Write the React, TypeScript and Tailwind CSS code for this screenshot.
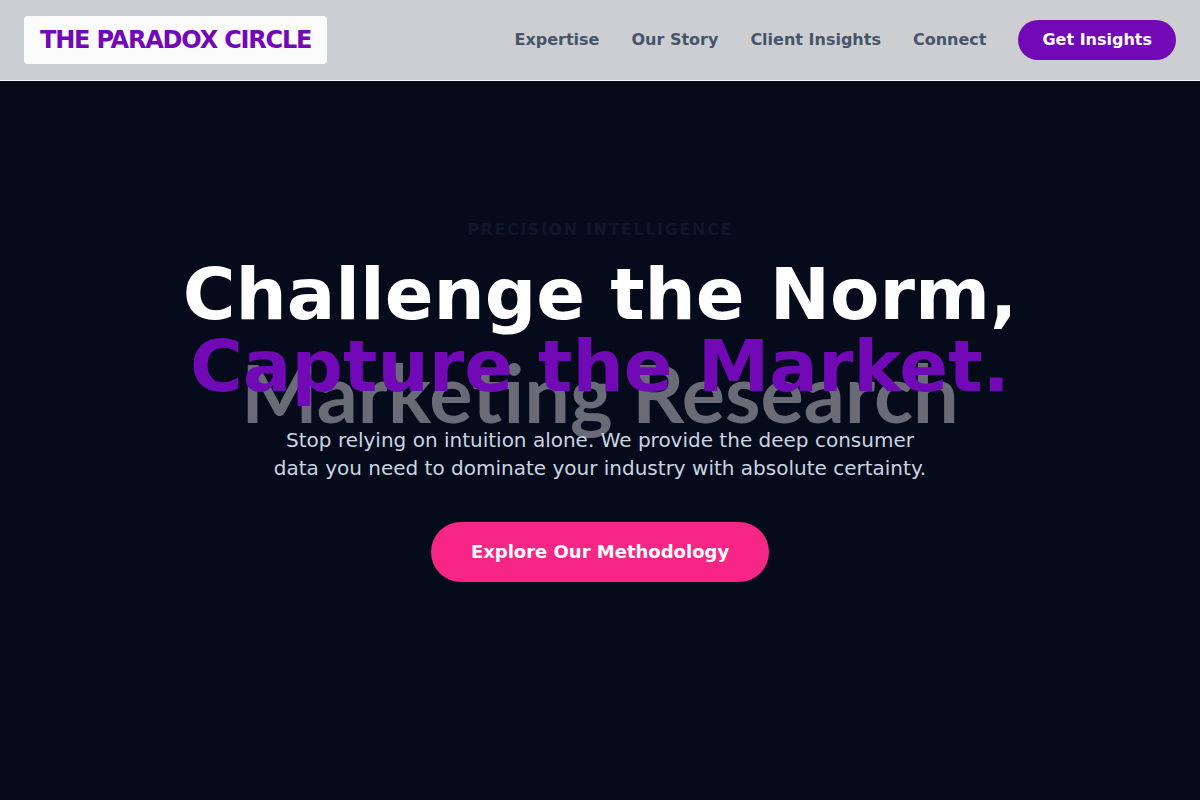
const navLinks = [
  { label: 'Expertise', href: '#expertise' },
  { label: 'Our Story', href: '#story' },
  { label: 'Client Insights', href: '#insights' },
  { label: 'Connect', href: '#connect' },
];

export default function App() {
  return (
    <div className="bg-[#060b1c] font-['DejaVu_Sans',sans-serif]">
      {/* Navigation */}
      <header className="fixed inset-x-0 top-0 z-50 border-b border-slate-100 bg-[#cdced1]">
        <nav className="flex items-center justify-between px-6 py-4">
          <a href="#" className="rounded bg-[#fbfbfb] px-4 py-2 text-2xl font-bold tracking-tighter text-[#7209b7]">
            THE PARADOX CIRCLE
          </a>
          <div className="flex items-center gap-8 font-semibold text-slate-600">
            {navLinks.map((link) => (
              <a key={link.label} href={link.href}>
                {link.label}
              </a>
            ))}
            <button type="button" className="rounded-full bg-[#7209b7] px-6 py-2 text-white">
              Get Insights
            </button>
          </div>
        </nav>
      </header>

      {/* Hero */}
      <main className="relative isolate flex min-h-screen items-center justify-center px-6 text-center">
        <p
          aria-hidden="true"
          className="absolute inset-0 -z-10 flex items-center justify-center pb-4 font-['Lato',sans-serif] text-[81px] font-bold text-[#696c76]"
        >
          Marketing Research
        </p>
        <div className="mx-auto max-w-4xl">
          <span className="mb-4 block font-bold uppercase tracking-widest text-[#0f172a]">
            Precision Intelligence
          </span>
          <h1 className="mb-6 text-7xl leading-none font-bold text-white">
            Challenge the Norm, <br />
            <span className="text-[#7209b7]">Capture the Market.</span>
          </h1>
          <p className="mx-auto mb-10 max-w-2xl text-xl text-slate-300">
            Stop relying on intuition alone. We provide the deep consumer data you need to dominate your industry with absolute certainty.
          </p>
          <button type="button" className="rounded-full bg-[#f72585] px-10 py-4 text-lg font-bold text-white">
            Explore Our Methodology
          </button>
        </div>
      </main>
    </div>
  );
}
